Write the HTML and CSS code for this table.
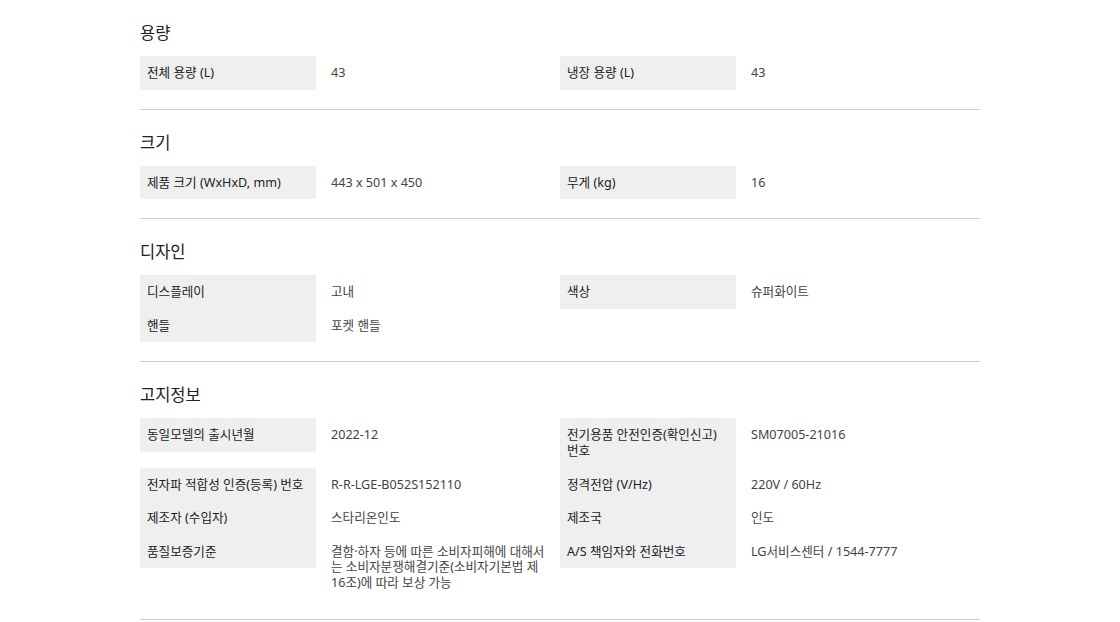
FILE: index.html
```html
<!DOCTYPE html>
<html lang="ko">
<head>
<meta charset="utf-8">
<title>제품 사양</title>
<link rel="stylesheet" href="styles.css">
</head>
<body>
<div class="spec">
  <section class="spec-group">
    <h3 class="spec-title">용량</h3>
    <dl class="spec-grid">
      <dt class="spec-label">전체 용량 (L)</dt><dd class="spec-value">43</dd>
      <dt class="spec-label">냉장 용량 (L)</dt><dd class="spec-value">43</dd>
    </dl>
  </section>
  <section class="spec-group">
    <h3 class="spec-title">크기</h3>
    <dl class="spec-grid">
      <dt class="spec-label">제품 크기 (WxHxD, mm)</dt><dd class="spec-value">443 x 501 x 450</dd>
      <dt class="spec-label">무게 (kg)</dt><dd class="spec-value">16</dd>
    </dl>
  </section>
  <section class="spec-group">
    <h3 class="spec-title">디자인</h3>
    <dl class="spec-grid">
      <dt class="spec-label">디스플레이</dt><dd class="spec-value">고내</dd>
      <dt class="spec-label">색상</dt><dd class="spec-value">슈퍼화이트</dd>
      <dt class="spec-label">핸들</dt><dd class="spec-value">포켓 핸들</dd>
    </dl>
  </section>
  <section class="spec-group">
    <h3 class="spec-title">고지정보</h3>
    <dl class="spec-grid">
      <dt class="spec-label">동일모델의 출시년월</dt><dd class="spec-value">2022-12</dd>
      <dt class="spec-label">전기용품 안전인증(확인신고) 번호</dt><dd class="spec-value">SM07005-21016</dd>
      <dt class="spec-label">전자파 적합성 인증(등록) 번호</dt><dd class="spec-value">R-R-LGE-B052S152110</dd>
      <dt class="spec-label">정격전압 (V/Hz)</dt><dd class="spec-value">220V / 60Hz</dd>
      <dt class="spec-label">제조자 (수입자)</dt><dd class="spec-value">스타리온인도</dd>
      <dt class="spec-label">제조국</dt><dd class="spec-value">인도</dd>
      <dt class="spec-label">품질보증기준</dt><dd class="spec-value">결함·하자 등에 따른 소비자피해에 대해서는 소비자분쟁해결기준(소비자기본법 제16조)에 따라 보상 가능</dd>
      <dt class="spec-label">A/S 책임자와 전화번호</dt><dd class="spec-value">LG서비스센터 / 1544-7777</dd>
    </dl>
  </section>
</div>
</body>
</html>
```
FILE: styles.css
```css
html, body {
  margin: 0;
  padding: 0;
  background: #fff;
}
body {
  font-family: "Noto Sans", "Noto Sans CJK KR", sans-serif;
  color: #333;
}
.spec {
  width: 840px;
  margin: 0 auto;
}
.spec-group {
  padding: 20px 0 19px;
  border-bottom: 1px solid #cccccc;
}
.spec-title {
  margin: 0 0 12px;
  font-family: "Noto Sans CJK KR", sans-serif;
  font-size: 16.5px;
  line-height: 24px;
  font-weight: 400;
  color: #222;
}
.spec-grid {
  display: grid;
  grid-template-columns: 176px 244px 176px 244px;
  align-items: start;
  margin: 0;
}
.spec-label,
.spec-value {
  margin: 0;
  font-size: 12.6px;
  line-height: 15.6px;
}
.spec-label {
  padding: 9px 6px 9px 7px;
  background: #efefef;
  color: #222;
}
.spec-value {
  padding: 9px 14px 9px 15px;
  color: #444;
}
```
